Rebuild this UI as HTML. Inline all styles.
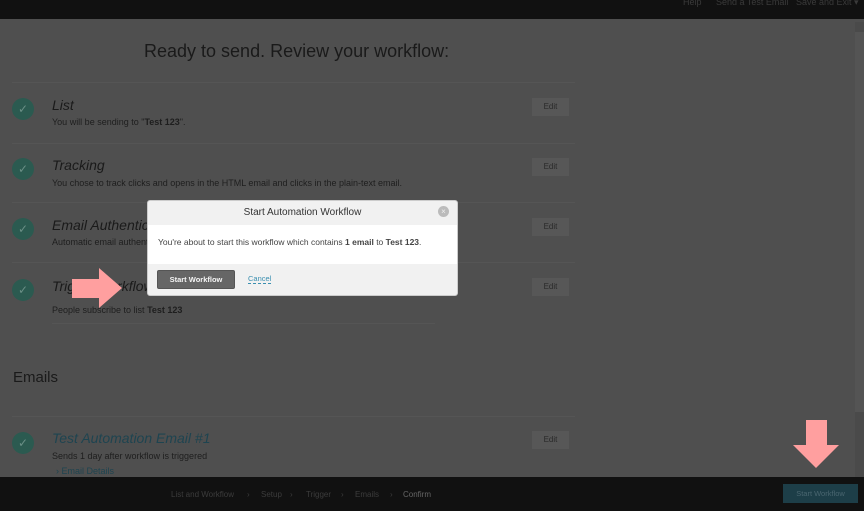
<!DOCTYPE html>
<html><head><meta charset="utf-8"><style>
*{margin:0;padding:0;box-sizing:border-box}
body{width:864px;height:511px;overflow:hidden;background:#4f4f4f;font-family:"Liberation Sans",sans-serif;position:relative;color:#1c1c1c}
.a{position:absolute}
.top{left:0;top:0;width:864px;height:19px;background:#111}
.top span{color:#3a3a3a;font-size:9px;position:absolute;top:-3px}
h1{position:absolute;left:144px;top:41px;font-size:18px;font-weight:normal;color:#1a1a1a}
.chk{position:absolute;left:12px;width:22px;height:22px;border-radius:50%;background:#2b5a50;color:#6a8f86;font-size:12px;text-align:center;line-height:22px}
.t{position:absolute;left:52px;font-size:14px;font-style:italic;color:#1a1a1a}
.d{position:absolute;left:52px;font-size:9px;color:#1e1e1e}
.e{position:absolute;left:532px;width:37px;height:18px;background:#575757;color:#2a2a2a;font-size:8px;text-align:center;line-height:18px}
.ln{position:absolute;left:12px;width:563px;height:1px;background:#555}
.bot{left:0;top:477px;width:864px;height:34px;background:#111}
.bot span{position:absolute;top:13px;font-size:8px;color:#3c3c3c}
</style></head><body>
<div class="a top"><span style="left:683px">Help</span><span style="left:716px">Send a Test Email</span><span style="left:796px">Save and Exit ▾</span></div>
<div class="a" style="left:855px;top:22px;width:9px;height:455px;background:#4a4a4a"></div>
<div class="a" style="left:855px;top:32px;width:9px;height:380px;background:#545454"></div>
<h1>Ready to send. Review your workflow:</h1>
<div class="ln" style="top:82px"></div>
<div class="chk" style="top:98px">✓</div><div class="t" style="top:97px">List</div><div class="d" style="top:117px">You will be sending to "<b>Test 123</b>".</div><div class="e" style="top:98px">Edit</div>
<div class="ln" style="top:143px"></div>
<div class="chk" style="top:158px">✓</div><div class="t" style="top:157px">Tracking</div><div class="d" style="top:178px">You chose to track clicks and opens in the HTML email and clicks in the plain-text email.</div><div class="e" style="top:158px">Edit</div>
<div class="ln" style="top:202px"></div>
<div class="chk" style="top:218px">✓</div><div class="t" style="top:217px">Email Authentication</div><div class="d" style="top:237px">Automatic email authentication</div><div class="e" style="top:218px">Edit</div>
<div class="ln" style="top:262px"></div>
<div class="chk" style="top:279px">✓</div><div class="t" style="top:278px">Trigger workflow when</div><div class="d" style="top:305px">People subscribe to list <b>Test 123</b></div><div class="e" style="top:278px">Edit</div>
<div class="ln" style="top:323px;left:52px;width:383px"></div>
<div class="a" style="left:13px;top:369px;font-size:15px;color:#1a1a1a">Emails</div>
<div class="ln" style="top:416px"></div>
<div class="chk" style="top:432px">✓</div><div class="t" style="top:430px;color:#1e4450">Test Automation Email #1</div><div class="d" style="top:451px">Sends 1 day after workflow is triggered</div><div class="d" style="top:466px;left:56px;color:#1e4450">› Email Details</div><div class="e" style="top:431px">Edit</div>
<div class="a" style="left:147px;top:200px;width:311px;height:96px;background:#f1f1f1;border-radius:3px;border:1px solid #ccc">
<div class="a" style="left:0;top:0;width:309px;text-align:center;font-size:10px;line-height:24px;color:#333">Start Automation Workflow</div>
<div class="a" style="left:290px;top:5px;width:11px;height:11px;border-radius:50%;background:#bbb;color:#eee;font-size:8px;line-height:11px;text-align:center">×</div>
<div class="a" style="left:0;top:24px;width:309px;height:39px;background:#fff;font-size:8.5px;color:#444;padding:12px 0 0 10px">You're about to start this workflow which contains <b>1 email</b> to <b>Test 123</b>.</div>
<div class="a" style="left:9px;top:69px;width:78px;height:19px;background:#666;border:1px solid #555;border-radius:2px;color:#f5f5f5;font-size:7.5px;font-weight:bold;text-align:center;line-height:17px">Start Workflow</div>
<div class="a" style="left:100px;top:73px;font-size:7.5px;color:#3a8fb0;border-bottom:1px dashed #3a8fb0">Cancel</div>
</div>
<svg class="a" style="left:0;top:0" width="864" height="511"><polygon points="72,279 99,279 99,268 122,288 99,308 99,298 72,298" fill="#ff9f9f"/><polygon points="806,420 827,420 827,445 839,445 816,468 793,445 806,445" fill="#ff9f9f"/></svg>
<div class="a bot"><span style="left:171px">List and Workflow</span><span style="left:247px">›</span><span style="left:261px">Setup</span><span style="left:290px">›</span><span style="left:306px">Trigger</span><span style="left:341px">›</span><span style="left:355px">Emails</span><span style="left:390px">›</span><span style="left:403px;color:#666">Confirm</span>
<div class="a" style="left:783px;top:7px;width:75px;height:19px;background:#1d3e48;color:#4a6670;font-size:7.5px;text-align:center;line-height:19px">Start Workflow</div></div>
</body></html>
